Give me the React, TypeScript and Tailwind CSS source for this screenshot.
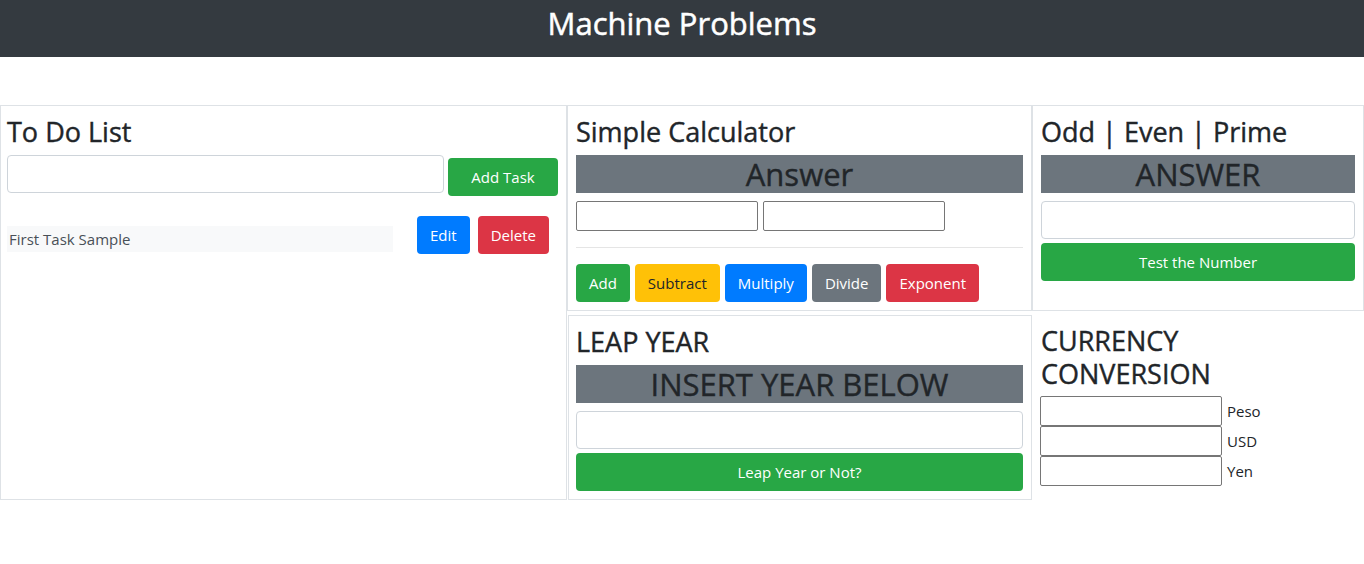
import React from 'react';

const formControl =
  'block w-full h-[38px] rounded border border-[#ced4da] bg-white px-3 text-base text-[#495057] outline-none';
const plainInput = 'h-[30px] w-[182px] rounded-[2px] border border-[#767676] bg-white px-1 text-sm outline-none';
const btn = 'h-[38px] rounded px-3 text-[15px] leading-6 border border-transparent';

function Band({ children }: { children: React.ReactNode }) {
  return (
    <div className="mb-2 h-[38px] bg-[#6c757d] text-center text-[31px] leading-[38px] font-medium text-[#212529] [-webkit-text-stroke-width:0.4px]">
      {children}
    </div>
  );
}

function Title({ children }: { children: React.ReactNode }) {
  return (
    <h3 className="mb-[6px] pt-[2px] text-[27px] leading-[33.6px] font-medium text-[#212529] [-webkit-text-stroke-width:0.4px]">
      {children}
    </h3>
  );
}

function TodoList() {
  return (
    <div className="h-[395px] w-[567px] shrink-0 border border-[#dee2e6] pt-[7px] pl-[6px] pr-2">
      <Title>To Do List</Title>
      <div className="flex items-start">
        <input className={`${formControl} w-[436px]`} />
        <button className={`${btn} mt-[3px] ml-[4px] w-[110px] shrink-0 bg-[#28a745] text-white`}>Add Task</button>
      </div>
      <div className="mt-5 flex items-start">
        <span className="mt-[10px] h-[26px] w-[386px] bg-[#f8f9fa] pt-px pl-[2px] text-[15px] leading-6 text-[#495057]">
          First Task Sample
        </span>
        <button className={`${btn} ml-6 bg-[#007bff] text-white`}>Edit</button>
        <button className={`${btn} ml-2 bg-[#dc3545] text-white`}>Delete</button>
      </div>
    </div>
  );
}

function Calculator() {
  return (
    <div className="h-[206px] w-[465px] shrink-0 border border-[#dee2e6] px-2 pt-[7px]">
      <Title>Simple Calculator</Title>
      <Band>Answer</Band>
      <div className="flex gap-[5px]">
        <input className={plainInput} />
        <input className={plainInput} />
      </div>
      <hr className="mt-4 mb-4 border-t border-[#e5e5e5]" />
      <div className="flex gap-[5px]">
        <button className={`${btn} bg-[#28a745] text-white`}>Add</button>
        <button className={`${btn} bg-[#ffc107] text-[#212529]`}>Subtract</button>
        <button className={`${btn} bg-[#007bff] text-white`}>Multiply</button>
        <button className={`${btn} bg-[#6c757d] text-white`}>Divide</button>
        <button className={`${btn} bg-[#dc3545] text-white`}>Exponent</button>
      </div>
    </div>
  );
}

function OddEven() {
  return (
    <div className="h-[206px] w-[332px] shrink-0 border border-[#dee2e6] px-2 pt-[7px]">
      <Title>Odd | Even | Prime</Title>
      <Band>ANSWER</Band>
      <input className={formControl} />
      <button className={`${btn} mt-1 w-full bg-[#28a745] text-white`}>Test the Number</button>
    </div>
  );
}

function LeapYear() {
  return (
    <div className="ml-px h-[185px] w-[464px] shrink-0 border border-[#dee2e6] pt-[7px] pl-[7px] pr-2">
      <Title>LEAP YEAR</Title>
      <Band>INSERT YEAR BELOW</Band>
      <input className={formControl} />
      <button className={`${btn} mt-1 w-full bg-[#28a745] text-white`}>Leap Year or Not?</button>
    </div>
  );
}

function Currency() {
  const rows = ['Peso', 'USD', 'Yen'];
  return (
    <div className="flex-1 pt-[9px] pl-[9px]">
      <h3 className="text-[27px] leading-[33px] font-medium text-[#212529] [-webkit-text-stroke-width:0.4px]">
        CURRENCY
        <br />
        CONVERSION
      </h3>
      <div className="mt-[6px] -ml-px">
        {rows.map((r) => (
          <div key={r} className="flex items-center">
            <input className={plainInput} />
            <span className="ml-[5px] text-[15px] text-[#212529]">{r}</span>
          </div>
        ))}
      </div>
    </div>
  );
}

export default function App() {
  return (
    <div className="min-h-[564px] bg-white font-['Open_Sans',sans-serif] text-[#212529]">
      <header className="h-[57px] bg-[#343a40] pt-[5px] text-center">
        <h2 className="text-[31px] leading-[1.2] font-medium text-white [-webkit-text-stroke-width:0.5px]">
          Machine Problems
        </h2>
      </header>
      <div className="mt-12 flex">
        <TodoList />
        <div className="flex w-[797px] flex-col">
          <div className="flex">
            <Calculator />
            <OddEven />
          </div>
          <div className="mt-1 flex">
            <LeapYear />
            <Currency />
          </div>
        </div>
      </div>
    </div>
  );
}
